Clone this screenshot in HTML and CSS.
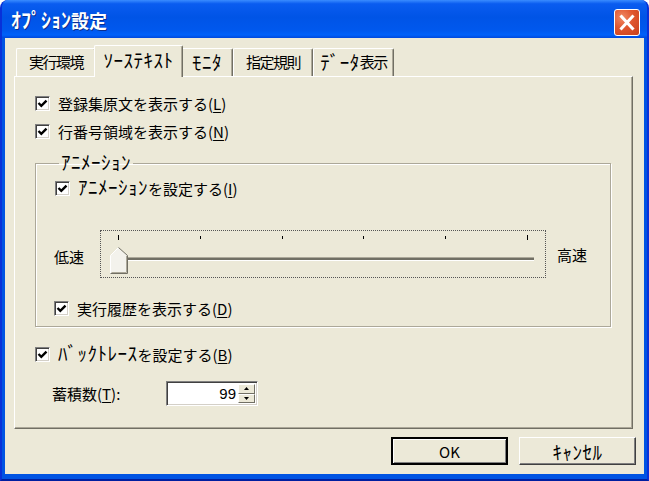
FILE: index.html
```html
<!DOCTYPE html>
<html lang="ja">
<head>
<meta charset="utf-8">
<title>ｵﾌﾟｼｮﾝ設定</title>
<link rel="stylesheet" href="styles.css">
</head>
<body>
<div class="window">
  <div class="titlebar">
    <span class="title"><span class="hw">ｵﾌﾟｼｮﾝ</span>設定</span>
    <span class="close">
      <svg width="26" height="27" viewBox="0 0 26 27"><path d="M7.5 7.5 L18.5 19.5 M18.5 7.5 L7.5 19.5" stroke="#fff" stroke-width="3" stroke-linecap="square"/></svg>
    </span>
  </div>
  <div class="client">
    <div class="tabs">
      <div class="tab t1">実行環境</div>
      <div class="tab t2 active"><span class="hw">ｿｰｽﾃｷｽﾄ</span></div>
      <div class="tab t3"><span class="hw">ﾓﾆﾀ</span></div>
      <div class="tab t4">指定規則</div>
      <div class="tab t5"><span class="hw">ﾃﾞｰﾀ</span>表示</div>
    </div>
    <div class="panel">
      <div class="check"><span class="box"><svg width="11" height="11" viewBox="0 0 11 11"><path d="M1.5 5 L4.3 7.8 L9.5 2.6" stroke="#000" stroke-width="2.4" fill="none"/></svg></span><span>登録集原文を表示する(<u>L</u>)</span></div>
      <div class="check"><span class="box"><svg width="11" height="11" viewBox="0 0 11 11"><path d="M1.5 5 L4.3 7.8 L9.5 2.6" stroke="#000" stroke-width="2.4" fill="none"/></svg></span><span>行番号領域を表示する(<u>N</u>)</span></div>
      <fieldset class="group">
        <legend><span class="hw">ｱﾆﾒｰｼｮﾝ</span></legend>
        <div class="check c3"><span class="box"><svg width="11" height="11" viewBox="0 0 11 11"><path d="M1.5 5 L4.3 7.8 L9.5 2.6" stroke="#000" stroke-width="2.4" fill="none"/></svg></span><span><span class="hw">ｱﾆﾒｰｼｮﾝ</span>を設定する(<u>I</u>)</span></div>
        <div class="speed">
          <span class="speed-label">低速</span>
          <div class="slider">
            <div class="ticks"><i class="end"></i><i></i><i></i><i></i><i></i><i class="end"></i></div>
            <div class="track"></div>
            <svg class="thumb" width="18" height="27" viewBox="0 0 18 27">
              <path d="M0.5 26.5 L0.5 8.5 L8.5 0.5 L17.5 8.5 L17.5 26.5 Z" fill="#F3F2EC"/>
              <path d="M0.5 26.5 L0.5 8.5 L8.5 0.5" stroke="#fff" fill="none"/>
              <path d="M8.5 0.5 L17.5 8.5 L17.5 26.5 L0.5 26.5" stroke="#716F64" fill="none"/>
              <path d="M1.5 25.5 L16.5 25.5 L16.5 8.9" stroke="#ACA899" fill="none"/>
            </svg>
          </div>
          <span class="speed-label hi">高速</span>
        </div>
        <div class="check c4"><span class="box"><svg width="11" height="11" viewBox="0 0 11 11"><path d="M1.5 5 L4.3 7.8 L9.5 2.6" stroke="#000" stroke-width="2.4" fill="none"/></svg></span><span>実行履歴を表示する(<u>D</u>)</span></div>
      </fieldset>
      <div class="check c5"><span class="box"><svg width="11" height="11" viewBox="0 0 11 11"><path d="M1.5 5 L4.3 7.8 L9.5 2.6" stroke="#000" stroke-width="2.4" fill="none"/></svg></span><span><span class="hw">ﾊﾞｯｸﾄﾚｰｽ</span>を設定する(<u>B</u>)</span></div>
      <div class="count-row">
        <span class="count-label">蓄積数(<u>T</u>):</span>
        <div class="spin">
          <span class="spin-value">99</span>
          <div class="spin-buttons">
            <span class="spin-btn"><svg width="5" height="3" viewBox="0 0 5 3"><path d="M2.5 0 L5 3 L0 3 Z" fill="#000"/></svg></span>
            <span class="spin-btn"><svg width="5" height="3" viewBox="0 0 5 3"><path d="M0 0 L5 0 L2.5 3 Z" fill="#000"/></svg></span>
          </div>
        </div>
      </div>
    </div>
    <div class="buttons">
      <div class="btn default">OK</div>
      <div class="btn"><span class="hw">ｷｬﾝｾﾙ</span></div>
    </div>
  </div>
</div>
</body>
</html>
```
FILE: styles.css
```css
* { box-sizing: border-box; }
html, body {
  margin: 0;
  padding: 0;
  background: #fff;
}
body {
  font-family: "Noto Sans CJK JP", "Noto Sans", sans-serif;
  font-size: 15px;
  color: #000;
}
.hw {
  font-size: 19px;
  line-height: 1;
  letter-spacing: 0.5px;
}
.window {
  width: 649px;
  height: 481px;
  display: flex;
  flex-direction: column;
  background: #0054E3;
  border-radius: 8px 8px 0 0;
  border-left: 2px solid #0831D9;
  border-right: 2px solid #0831D9;
  border-bottom: 2px solid #001EA0;
  overflow: hidden;
}
.titlebar {
  height: 38px;
  flex: none;
  display: flex;
  align-items: center;
  justify-content: space-between;
  padding: 0 7px 0 9px;
  background: linear-gradient(to bottom, #3A8CFF 0%, #0A5CF0 10%, #0054E6 45%, #0058EE 80%, #0061FA 92%, #0048DC 100%);
}
.title {
  color: #fff;
  font-weight: bold;
  font-size: 18px;
  text-shadow: 1px 1px 0 #0B2F8F;
  margin-top: 2px;
  line-height: 22px;
}
.title .hw { font-size: 20px; letter-spacing: 0; }
.close {
  width: 26px;
  height: 27px;
  margin-top: 6px;
  border: 1px solid #fff;
  border-radius: 3px;
  background: radial-gradient(circle at 30% 30%, #F08A65 0%, #E0562F 45%, #C8401C 100%);
  display: flex;
  align-items: center;
  justify-content: center;
}
.close svg { display: block; margin: -1px; }
.client {
  flex: 1;
  background: #ECE9D8;
  margin: 0 3px 5px 3px;
  padding: 7px 11px 0 9px;
  display: flex;
  flex-direction: column;
}
.tabs {
  display: flex;
  align-items: flex-end;
  height: 32px;
  padding-left: 2px;
  margin-bottom: -1px;
  position: relative;
  z-index: 1;
}
.tab {
  height: 28px;
  margin-bottom: 1px;
  display: flex;
  align-items: center;
  justify-content: center;
  font-size: 15px;
  letter-spacing: -1.5px;
  border-top: 1px solid #fff;
  border-left: 1px solid #fff;
  border-right: 1px solid #716F64;
  box-shadow: inset -1px 0 0 #ACA899;
  border-radius: 2px 2px 0 0;
  background: #ECE9D8;
  padding-bottom: 2px;
  white-space: nowrap;
}
.tab .hw { letter-spacing: 0.5px; }
.t1 { width: 80px; }
.t2 { width: 89px; }
.t3 { width: 52px; }
.t4 { width: 80px; }
.t5 { width: 81px; }
.tab.active {
  height: 32px;
  margin-bottom: 0;
  margin-left: -2px;
  margin-right: -2px;
  position: relative;
  z-index: 2;
  padding-bottom: 4px;
}
.panel {
  height: 353px;
  border: 1px solid #fff;
  border-right-color: #716F64;
  border-bottom-color: #716F64;
  box-shadow: inset -1px -1px 0 #ACA899;
  padding: 12px 21px 0 20px;
  display: flex;
  flex-direction: column;
}
.check {
  height: 28px;
  display: flex;
  align-items: center;
  gap: 8px;
  white-space: nowrap;
}
.box {
  width: 15px;
  height: 15px;
  flex: none;
  background: #fff;
  border: 1px solid;
  border-color: #808080 #fff #fff #808080;
  box-shadow: inset 1px 1px 0 #404040, inset -1px -1px 0 #D4D0C8;
  display: flex;
  align-items: center;
  justify-content: center;
}
.box svg { display: block; }
u { text-decoration: underline; text-underline-offset: 2px; }
.group {
  margin: 7px 0 0 0;
  padding: 2px 20px 4px 18px;
  border: 1px solid #ACA899;
  box-shadow: 1px 1px 0 #fff, inset 1px 1px 0 #fff;
  min-width: 0;
}
.group legend {
  padding: 0 2px;
  margin-left: 5px;
  font-size: 15px;
  line-height: 20px;
}
.c3 { margin-left: 1px; margin-top: -2px; }
.speed {
  margin-top: 28px;
  height: 48px;
  display: flex;
  align-items: center;
}
.speed-label { width: 46px; padding-top: 4px; }
.speed-label.hi { width: auto; margin-left: 11px; padding-top: 0; }
.slider {
  position: relative;
  width: 446px;
  height: 48px;
  border: 1px dotted #555;
  padding: 4px 17px 0 17px;
}
.ticks {
  display: flex;
  justify-content: space-between;
  height: 6px;
  align-items: flex-start;
}
.ticks i {
  display: block;
  width: 1px;
  height: 3px;
  margin-top: 1px;
  background: #000;
}
.ticks i.end { height: 5px; margin-top: 0; }
.track {
  margin-top: 16px;
  width: 416px;
  height: 4px;
  border-top: 1px solid #ACA899;
  border-bottom: 1px solid #fff;
  background: #716F64;
}
.thumb {
  position: absolute;
  left: 9px;
  top: 16px;
  display: block;
}
.c4 { margin-top: 16px; }
.c5 { margin-top: 13px; }
.count-row {
  margin-top: 13px;
  height: 25px;
  display: flex;
  align-items: center;
  padding-left: 17px;
}
.count-label { width: 114px; }
.spin {
  width: 92px;
  height: 25px;
  background: #fff;
  border: 1px solid;
  border-color: #808080 #fff #fff #808080;
  box-shadow: inset 1px 1px 0 #404040, inset -1px -1px 0 #D4D0C8;
  display: flex;
  align-items: center;
  justify-content: flex-end;
  padding: 2px;
}
.spin-value { margin-right: 2px; font-family: "Liberation Sans", sans-serif; font-size: 15px; }
.spin-buttons {
  width: 17px;
  height: 100%;
  display: flex;
  flex-direction: column;
}
.spin-btn {
  flex: 1;
  background: #ECE9D8;
  border: 1px solid;
  border-color: #fff #716F64 #716F64 #fff;
  display: flex;
  align-items: center;
  justify-content: center;
}
.spin-btn svg { display: block; }
.buttons {
  display: flex;
  justify-content: flex-end;
  gap: 11px;
  margin-top: 8px;
  margin-right: -3px;
}
.btn {
  width: 117px;
  height: 28px;
  display: flex;
  align-items: center;
  justify-content: center;
  background: #ECE9D8;
  border: 1px solid;
  border-color: #fff #404040 #404040 #fff;
  box-shadow: inset -1px -1px 0 #808080;
  font-size: 15px;
}
.btn.default {
  border: 2px solid #000;
  box-shadow: inset 1px 1px 0 #fff, inset -1px -1px 0 #808080;
}
```
